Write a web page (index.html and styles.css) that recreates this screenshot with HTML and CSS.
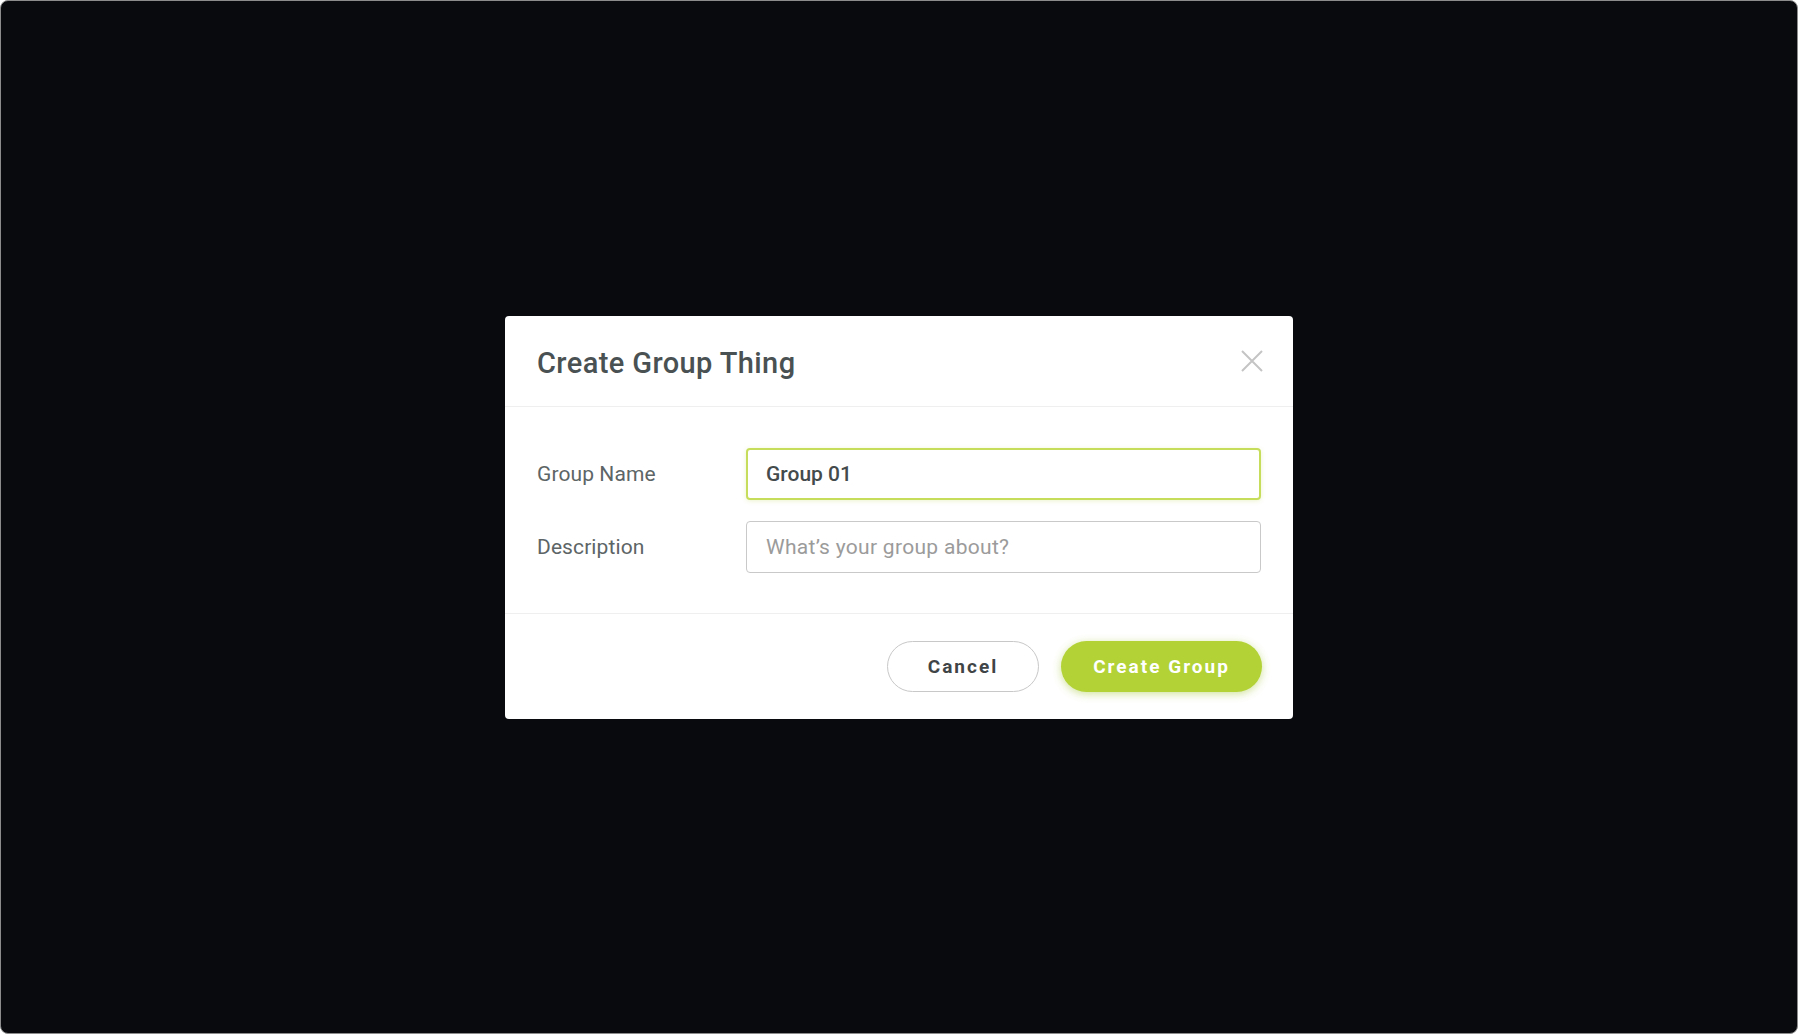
FILE: index.html
```html
<!DOCTYPE html>
<html lang="en">
<head>
<meta charset="utf-8">
<title>Create Group Thing</title>
<link rel="stylesheet" href="styles.css">
</head>
<body>
<div class="screen">
  <div class="modal">
    <div class="modal-header">
      <h1 class="modal-title">Create Group Thing</h1>
      <button class="close-btn" aria-label="Close">
        <svg width="22" height="22" viewBox="0 0 22 22"><path d="M1 1 L21 21 M21 1 L1 21" stroke="#c4c4c4" stroke-width="2" fill="none"/></svg>
      </button>
    </div>
    <div class="modal-body">
      <div class="field">
        <label class="field-label">Group Name</label>
        <input class="field-input focused" type="text" value="Group 01">
      </div>
      <div class="field">
        <label class="field-label">Description</label>
        <input class="field-input" type="text" placeholder="What’s your group about?">
      </div>
    </div>
    <div class="modal-footer">
      <button class="btn btn-cancel">Cancel</button>
      <button class="btn btn-primary">Create Group</button>
    </div>
  </div>
</div>
</body>
</html>
```

FILE: styles.css
```css
html, body {
  margin: 0;
  padding: 0;
  background: #ffffff;
}
body {
  font-family: Roboto, "Liberation Sans", sans-serif;
}
.screen {
  box-sizing: border-box;
  width: 1798px;
  height: 1034px;
  background: #080a0e;
  border: 1px solid #8c8c8c;
  border-radius: 8px;
  display: flex;
  align-items: center;
  justify-content: center;
}
.modal {
  width: 788px;
  background: #ffffff;
  border-radius: 4px;
  display: flex;
  flex-direction: column;
}
.modal-header {
  height: 91px;
  box-sizing: border-box;
  border-bottom: 1px solid #efefef;
  display: flex;
  align-items: center;
  justify-content: space-between;
  padding: 0 30px 0 32px;
}
.modal-title {
  margin: 0;
  padding-top: 4px;
  font-size: 29px;
  font-weight: 500;
  color: #4a5152;
  letter-spacing: 0.4px;
}
.close-btn {
  background: none;
  border: 0;
  padding: 0;
  width: 22px;
  height: 22px;
  display: flex;
}
.modal-body {
  padding: 41px 31px 40px 32px;
  display: flex;
  flex-direction: column;
  gap: 21px;
  border-bottom: 1px solid #efefef;
}
.field {
  display: flex;
  align-items: center;
}
.field-label {
  width: 209px;
  font-size: 21px;
  color: #5d6566;
  letter-spacing: 0.1px;
}
.field-input {
  box-sizing: border-box;
  width: 515px;
  height: 52px;
  border: 1px solid #c9c9c9;
  border-radius: 4px;
  padding: 0 19px;
  font-family: Roboto, "Liberation Sans", sans-serif;
  font-size: 21px;
  letter-spacing: 0.3px;
  color: #444b4c;
  outline: none;
}
.field-input::placeholder {
  color: #9b9b9b;
}
.field-input.focused {
  border: 2px solid #c6dd5c;
  padding: 0 18px;
  font-weight: 500;
  letter-spacing: 0;
  box-shadow: 0 1px 4px rgba(180, 210, 60, 0.25);
}
.modal-footer {
  padding: 27px 31px 27px;
  display: flex;
  justify-content: flex-end;
  gap: 22px;
}
.btn {
  height: 51px;
  border-radius: 26px;
  font-family: Roboto, "Liberation Sans", sans-serif;
  font-size: 19px;
  font-weight: 700;
  letter-spacing: 2px;
  cursor: pointer;
}
.btn-cancel {
  width: 152px;
  background: #ffffff;
  border: 1px solid #c8c8c8;
  color: #3f4546;
}
.btn-primary {
  width: 201px;
  background: #b2d235;
  border: 0;
  color: #ffffff;
  box-shadow: 0 2px 8px rgba(150, 190, 30, 0.45);
}
```
